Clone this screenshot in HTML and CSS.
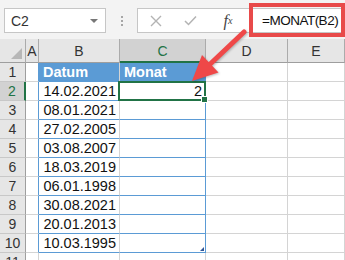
FILE: index.html
```html
<!DOCTYPE html>
<html lang="de">
<head>
    <meta charset="UTF-8">
    <title>MONAT Funktion</title>
    <link rel="stylesheet" href="styles.css">
</head>
<body>

    <div class="toolbar">
        <div class="namebox">
            <span>C2</span>
            <span class="caret"></span>
        </div>
        <div class="grip"><i></i><i></i><i></i></div>
        <div class="fbar">
            <span class="ficon">
                <svg width="12" height="12" viewBox="0 0 12 12"><path d="M1 1 L11 11 M11 1 L1 11" stroke="#b3b3b3" stroke-width="1.4" fill="none"/></svg>
            </span>
            <span class="ficon">
                <svg width="13" height="11" viewBox="0 0 13 11"><path d="M1 6 L4.5 9.5 L12 1.5" stroke="#b3b3b3" stroke-width="1.5" fill="none"/></svg>
            </span>
            <span class="ficon fx">f<sub>x</sub></span>
            <div class="formula">=MONAT(B2)</div>
        </div>
    </div>

    <div class="sheet">
        <!-- Kopfzeile -->
        <div class="corner"></div>
        <div class="colhead">A</div>
        <div class="colhead">B</div>
        <div class="colhead active">C</div>
        <div class="colhead">D</div>
        <div class="colhead">E</div>

        <div class="rowhead">1</div>
        <div class="cell edge"></div>
        <div class="cell tbl thead">Datum</div>
        <div class="cell tbl thead last">Monat</div>
        <div class="cell"></div>
        <div class="cell"></div>

        <div class="rowhead active">2</div>
        <div class="cell edge"></div>
        <div class="cell tbl num">14.02.2021</div>
        <div class="cell tbl num last selected">2</div>
        <div class="cell"></div>
        <div class="cell"></div>

        <div class="rowhead">3</div>
        <div class="cell edge"></div>
        <div class="cell tbl num">08.01.2021</div>
        <div class="cell tbl last"></div>
        <div class="cell"></div>
        <div class="cell"></div>

        <div class="rowhead">4</div>
        <div class="cell edge"></div>
        <div class="cell tbl num">27.02.2005</div>
        <div class="cell tbl last"></div>
        <div class="cell"></div>
        <div class="cell"></div>

        <div class="rowhead">5</div>
        <div class="cell edge"></div>
        <div class="cell tbl num">03.08.2007</div>
        <div class="cell tbl last"></div>
        <div class="cell"></div>
        <div class="cell"></div>

        <div class="rowhead">6</div>
        <div class="cell edge"></div>
        <div class="cell tbl num">18.03.2019</div>
        <div class="cell tbl last"></div>
        <div class="cell"></div>
        <div class="cell"></div>

        <div class="rowhead">7</div>
        <div class="cell edge"></div>
        <div class="cell tbl num">06.01.1998</div>
        <div class="cell tbl last"></div>
        <div class="cell"></div>
        <div class="cell"></div>

        <div class="rowhead">8</div>
        <div class="cell edge"></div>
        <div class="cell tbl num">30.08.2021</div>
        <div class="cell tbl last"></div>
        <div class="cell"></div>
        <div class="cell"></div>

        <div class="rowhead">9</div>
        <div class="cell edge"></div>
        <div class="cell tbl num">20.01.2013</div>
        <div class="cell tbl last"></div>
        <div class="cell"></div>
        <div class="cell"></div>

        <div class="rowhead">10</div>
        <div class="cell edge"></div>
        <div class="cell tbl num">10.03.1995</div>
        <div class="cell tbl last resize"></div>
        <div class="cell"></div>
        <div class="cell"></div>

        <div class="rowhead">11</div>
        <div class="cell"></div>
        <div class="cell"></div>
        <div class="cell"></div>
        <div class="cell"></div>
        <div class="cell"></div>
    </div>

    <!-- Markierung und Pfeil -->
    <div class="callout"></div>
    <svg class="arrow" width="345" height="260" viewBox="0 0 345 260">
        <line x1="244" y1="32" x2="206" y2="68" stroke="#ef4848" stroke-width="5" stroke-linecap="round"/>
        <polygon points="192,81 202,55 218.5,72.5" fill="#ef4848"/>
    </svg>

</body>
</html>
```

FILE: styles.css
```css
body {
    margin: 0;
    width: 345px;
    height: 260px;
    overflow: hidden;
    position: relative;
    font-family: 'Liberation Sans', Arial, sans-serif;
    background-color: #fff;
    color: #222;
}

.toolbar {
    height: 39px;
    background-color: #f3f3f3;
    display: flex;
    align-items: flex-start;
    padding-top: 8px;
    box-sizing: border-box;
}

.namebox {
    width: 102px;
    height: 25px;
    margin-left: 4px;
    background-color: #fff;
    border: 1px solid #c6c6c6;
    box-sizing: border-box;
    display: flex;
    align-items: center;
    justify-content: space-between;
    padding: 0 7px 0 6px;
    font-size: 14px;
    color: #333;
}

.caret {
    width: 0;
    height: 0;
    border-left: 4px solid transparent;
    border-right: 4px solid transparent;
    border-top: 4px solid #777;
}

.grip {
    width: 31px;
    height: 25px;
    display: flex;
    flex-direction: column;
    align-items: center;
    justify-content: center;
    gap: 2px;
}

.grip i {
    width: 2px;
    height: 2px;
    background-color: #a6a6a6;
}

.fbar {
    flex: 1;
    height: 25px;
    background-color: #fff;
    border: 1px solid #c6c6c6;
    border-right: none;
    box-sizing: border-box;
    display: flex;
    align-items: center;
}

.ficon {
    width: 35px;
    display: flex;
    justify-content: center;
    align-items: center;
}

.fx {
    width: 40px;
    font-family: 'Liberation Serif', serif;
    font-style: italic;
    font-size: 16px;
    color: #444;
}

.fx sub {
    font-size: 10px;
    vertical-align: -1px;
}

.formula {
    padding-left: 14px;
    font-size: 13.5px;
    letter-spacing: -0.5px;
    color: #111;
    white-space: nowrap;
}

.sheet {
    display: grid;
    grid-template-columns: 26px 13px 81px 86px 82px 1fr;
    grid-template-rows: 24px repeat(11, 19px);
    font-size: 14.5px;
}

.sheet > div {
    box-sizing: border-box;
    white-space: nowrap;
}

.corner {
    background-color: #e6e6e6;
    border-right: 1px solid #ababab;
    border-bottom: 1px solid #9e9e9e;
    position: relative;
}

.corner::after {
    content: "";
    position: absolute;
    right: 3px;
    bottom: 3px;
    width: 0;
    height: 0;
    border-left: 11px solid transparent;
    border-bottom: 11px solid #b7b7b7;
}

.colhead {
    background-color: #e6e6e6;
    border-right: 1px solid #ababab;
    border-bottom: 1px solid #9e9e9e;
    text-align: center;
    line-height: 24px;
    font-size: 14px;
    color: #333;
}

.colhead.active {
    background-color: #d2d2d2;
    color: #217346;
    border-bottom: 2px solid #217346;
}

.rowhead {
    background-color: #e6e6e6;
    border-right: 1px solid #9e9e9e;
    border-bottom: 1px solid #c8c8c8;
    text-align: center;
    line-height: 19px;
    font-size: 14px;
    color: #333;
}

.rowhead.active {
    background-color: #d2d2d2;
    color: #217346;
    border-right: 2px solid #217346;
}

.cell {
    border-right: 1px solid #d4d4d4;
    border-bottom: 1px solid #d4d4d4;
    line-height: 19px;
    position: relative;
}

.cell.edge {
    border-right-color: #5b9bd5;
}

.cell.tbl {
    border-bottom-color: #5b9bd5;
}

.cell.tbl.last {
    border-right-color: #5b9bd5;
}

.thead {
    background-color: #5b9bd5;
    color: #fff;
    font-weight: bold;
    padding-left: 4px;
}

.num {
    text-align: right;
    padding-right: 3px;
    color: #111;
}

.selected::after {
    content: "";
    position: absolute;
    left: -2px;
    top: -1px;
    right: -1px;
    bottom: -1px;
    border: 2px solid #217346;
}

.selected::before {
    content: "";
    position: absolute;
    right: -3px;
    bottom: -3px;
    width: 5px;
    height: 5px;
    background-color: #217346;
    border: 1px solid #fff;
    z-index: 1;
}

.resize::after {
    content: "";
    position: absolute;
    right: 1px;
    bottom: 1px;
    width: 0;
    height: 0;
    border-left: 4px solid transparent;
    border-bottom: 4px solid #2f5597;
}

.callout {
    position: absolute;
    left: 249px;
    top: 3px;
    width: 96px;
    height: 34px;
    border: 4px solid #e84a4a;
    box-sizing: border-box;
}

.arrow {
    position: absolute;
    left: 0;
    top: 0;
    pointer-events: none;
    filter: drop-shadow(1px 1px 1px rgba(0, 0, 0, 0.25));
}
```
